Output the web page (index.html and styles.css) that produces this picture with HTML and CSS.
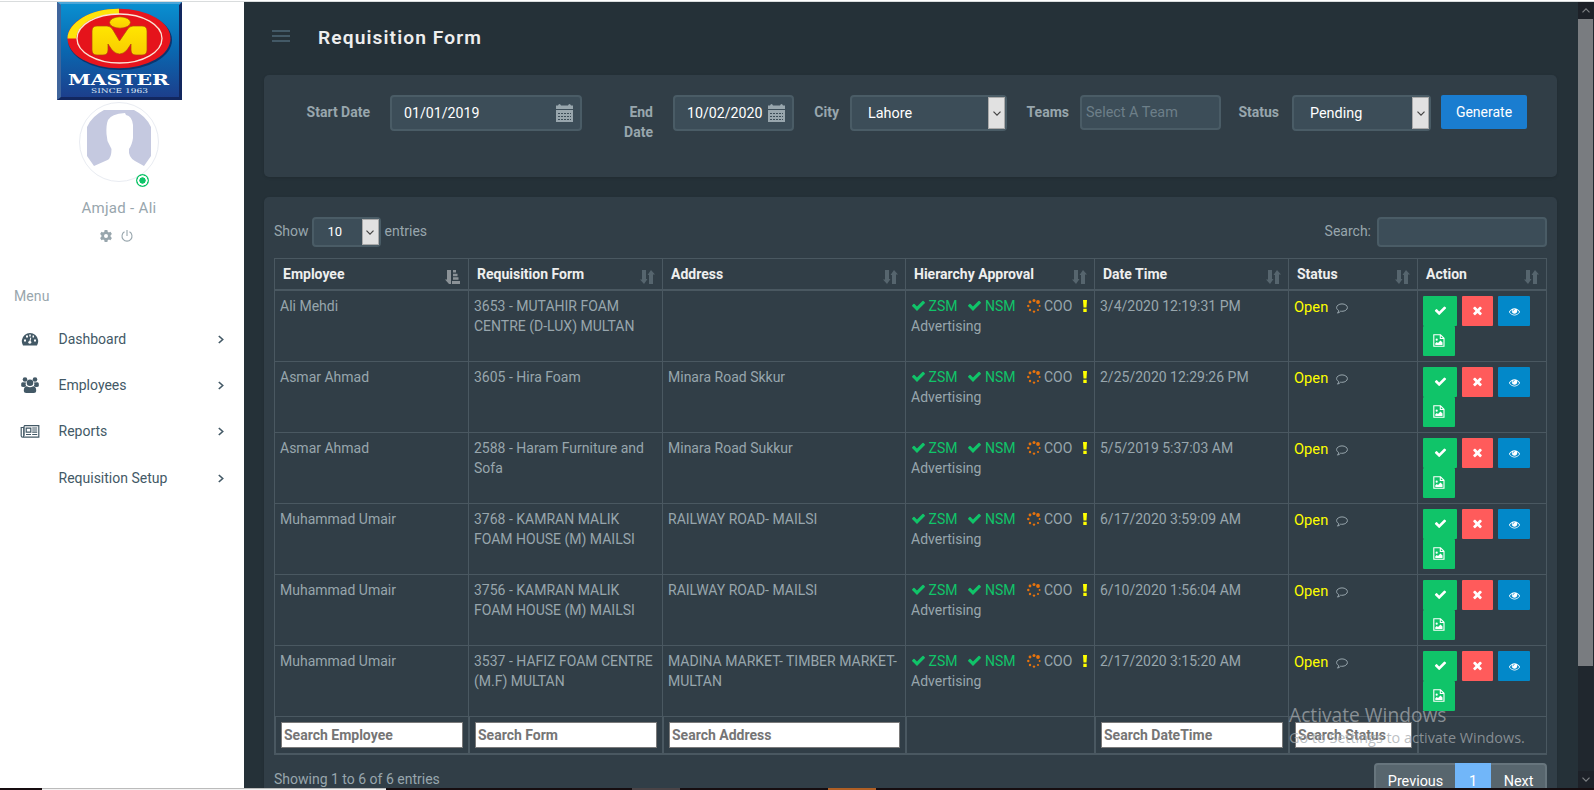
FILE: index.html
```html
<!DOCTYPE html>
<html lang="en">
<head>
<meta charset="utf-8">
<title>Requisition Form</title>
<link rel="stylesheet" href="styles.css">
</head>
<body>
<svg class="defs" aria-hidden="true">
  <symbol id="check" viewBox="0 0 1792 1792"><path d="M1671 566q0 40-28 68l-724 724-136 136q-28 28-68 28t-68-28l-136-136-362-362q-28-28-28-68t28-68l136-136q28-28 68-28t68 28l294 295 656-657q28-28 68-28t68 28l136 136q28 28 28 68z"/></symbol>
  <symbol id="times" viewBox="0 0 1792 1792"><path d="M1490 1322q0 40-28 68l-136 136q-28 28-68 28t-68-28l-294-294-294 294q-28 28-68 28t-68-28l-136-136q-28-28-28-68t28-68l294-294-294-294q-28-28-28-68t28-68l136-136q28-28 68-28t68 28l294 294 294-294q28-28 68-28t68 28l136 136q28 28 28 68t-28 68l-294 294 294 294q28 28 28 68z"/></symbol>
  <symbol id="eye" viewBox="0 0 1792 1792"><path d="M1664 960q-152-236-381-353 61 104 61 225 0 185-131.500 316.500t-316.500 131.500-316.500-131.500-131.500-316.500q0-121 61-225-229 117-381 353 133 205 333.500 326.500t434.500 121.500 434.500-121.500 333.500-326.500zm-720-384q0-20-14-34t-34-14q-125 0-214.500 89.500t-89.500 214.500q0 20 14 34t34 14 34-14 14-34q0-86 61-147t147-61q20 0 34-14t14-34zm848 384q0 34-20 69-140 230-376.500 368.500t-499.500 138.500-499.500-139-376.500-368q-20-35-20-69t20-69q140-229 376.500-368t499.500-139 499.500 139 376.500 368q20 35 20 69z"/></symbol>
  <symbol id="file" viewBox="0 0 12 13"><path fill="none" stroke="currentColor" stroke-width="1.100" d="M.8.8h6.700l3.500 3.500v8H.8zM7.300.8v3.700H11"/><circle cx="3.700" cy="5.700" r="1.100"/><path d="M2.300 11V9.300l1.500-1.400 1.200 1.100 2.500-2.500 2 2V11z"/></symbol>
  <symbol id="spin" viewBox="0 0 14 14"><circle cx="7" cy="1.500" r="1.500"/><circle cx="11" cy="3" r="1.900"/><circle cx="12.600" cy="7" r="1"/><circle cx="11" cy="11" r="1.100"/><circle cx="7" cy="12.600" r="1.200"/><circle cx="3" cy="11" r="1.200"/><circle cx="1.300" cy="7" r="1.200"/><circle cx="3" cy="3" r="1.400"/></symbol>
  <symbol id="bang" viewBox="0 0 4 12"><path d="M0 0h4l-.5 7.500h-3zM.3 8.700h3.400V12H.3z"/></symbol>
  <symbol id="comment" viewBox="0 0 12 11"><path fill="none" stroke="currentColor" d="M6 .9c3 0 5.400 1.600 5.400 3.700S9 8.300 6 8.300q-.7 0-1.400-.1Q3.400 9.700 1.500 10.100q1-1 1.200-2.600C1.400 6.800.6 5.800.6 4.600.6 2.500 3 .9 6 .9z"/></symbol>
  <symbol id="sort" viewBox="0 0 15 14"><path d="M2 0h4v9h1.500L4 14 0 9.500h2zM9 14V5H7.500L11 0l4 4.500h-2V14z"/></symbol>
  <symbol id="sort-asc" viewBox="0 0 15 14"><path d="M2 0h4v14H4L0 9.500h2zM8 0h3v2.500H8zM8 3.700h4.500v2.500H8zM8 7.300h5.500v2.500H8zM7 11h8v3H7z"/></symbol>
  <symbol id="calendar" viewBox="0 0 17 18"><path d="M0 1.500h2Q2.500 0 3.500 0T5 1.500h7Q12.500 0 13.500 0T15 1.500h2V5H0zM0 6h17v12H0z"/><path stroke="#3c4d58" stroke-width="1" stroke-dasharray="2 1" d="M2 9.500h13M2 12.500h13M2 15.500h13"/></symbol>
  <symbol id="down" viewBox="0 0 8 5"><path fill="none" stroke="currentColor" stroke-width="1.200" d="M.5.6 4 4.100 7.500.6"/></symbol>
  <symbol id="right" viewBox="0 0 6 8"><path fill="none" stroke="currentColor" stroke-width="1.600" d="M.8.5 4.700 4 .8 7.500"/></symbol>
</svg>

<div class="strip-top"></div>
<div class="app">
  <aside class="sidebar">
    <svg class="logo" viewBox="0 0 125 98">
      <defs>
        <linearGradient id="sky" x2="0" y2="1"><stop offset="0" stop-color="#0a8fd0"/><stop offset=".5" stop-color="#0a67b0"/><stop offset="1" stop-color="#1c3f8c"/></linearGradient>
        <linearGradient id="gold" x2="0" y2="1"><stop offset="0" stop-color="#ffe600"/><stop offset="1" stop-color="#f9cc00"/></linearGradient>
      </defs>
      <path fill="#12275f" d="M0 0h125v98H0z"/>
      <path fill="#4aa5d8" d="M0 0h125l-3 3H4z"/>
      <path fill="url(#sky)" d="M4 2h118v93H4z"/>
      <path fill="#5d8fc4" d="M0 0l4 3v92l-4 3z" opacity=".6"/>
      <ellipse cx="63" cy="38" rx="52" ry="30" fill="#0b356f"/>
      <ellipse cx="62" cy="36.500" rx="51.500" ry="29.800" fill="#e8151d"/>
      <path fill="#ffe40a" d="M10.500 36.500C11 20 34 6.500 62 6.700V12C38 12 20 22 19.500 36.500z"/>
      <ellipse cx="62.500" cy="36.500" rx="42.500" ry="24.500" fill="#e5131b" stroke="#fbe5d6" stroke-width="1.300"/>
      <g stroke="#b5420c" stroke-width=".7" fill="url(#gold)"><path d="M35 29q0-5 5-5h10q4 0 6 4l6.500 11 7.500-11q2-4 6-4h9q5 0 5 5v19q0 5-5 5h-6q-5 0-5-5v-6l-4 6q-7.500 8-15 0l-4-6v6q0 5-5 5h-6q-5 0-5-5z"/><ellipse cx="63" cy="20.500" rx="10.500" ry="5.700"/></g>
      <text class="logo-name" x="11" y="83" textLength="101" lengthAdjust="spacingAndGlyphs">MASTER</text>
      <text class="logo-since" x="34" y="91" textLength="57" lengthAdjust="spacingAndGlyphs">SINCE 1963</text>
    </svg>
    <div class="avatar">
      <svg viewBox="0 0 64 56"><path fill="#c5c9e0" d="M0 17Q5 6 17 0h30q12 6 17 17v29l-7 10-9-5q-7-4-6-12 3-4 4-11V15q-1-9-7-10l-1-2q-14 1-17 7-2 5-1.500 14l1 7 4 8q0 9-4 11L7 56 0 46z"/></svg>
      <i class="online"></i>
    </div>
    <div class="user">Amjad - Ali</div>
    <div class="user-tools">
      <svg viewBox="0 0 12 12" class="gear"><path fill-rule="evenodd" d="M4.600 0h2.800l.3 1.700 1.200.7L10.500 1.800l1.400 2.300-1.300 1.200v1.400l1.300 1.200-1.400 2.300-1.600-.6-1.200.7-.3 1.700H4.600l-.3-1.700-1.200-.7-1.600.6L.1 7.900l1.300-1.200V5.300L.1 4.100l1.400-2.300 1.600.6 1.200-.7zM6 4a2 2 0 1 0 0 4 2 2 0 0 0 0-4z"/></svg>
      <svg viewBox="0 0 12 12" class="power"><path d="M3.500 1.800a5 5 0 1 0 5 0M6 0v6"/></svg>
    </div>
    <nav class="menu">
      <div class="menu-title">Menu</div>
      <a class="item"><svg class="mi" viewBox="0 0 18 14"><path fill-rule="evenodd" d="M2 13.500A8.200 8.200 0 1 1 16 13.500zM3 7.500v2h2v-2zM5 3.500v2h2v-2zM11.500 3.500v2h1.500v-2zM13 7.500v2h2v-2zM8.300 2.500v2h1.500v-2zM9.300 5.500 8.500 9q-1.700.5-1.200 2 1.500 1.500 3 0 .4-1.200-.8-1.900l.8-3.400z"/></svg><span>Dashboard</span><svg class="chev"><use href="#right"/></svg></a>
      <a class="item"><svg class="mi tall" viewBox="0 0 18 16"><circle cx="4" cy="2.500" r="2.300"/><circle cx="14" cy="2.500" r="2.300"/><path d="M.2 9V6.500Q.8 5 2 5.200l3 .3q-1 2 .3 3.800Q4 9.500 3.500 10 .2 10.200.2 9zM17.800 9V6.500Q17.200 5 16 5.200l-3 .3q1 2-.3 3.800 1.300.2 1.800.7 3.300.2 3.300-1z"/><circle cx="9" cy="5.800" r="3.300"/><path d="M2.800 13.500q0-4 3-4.200 3.200 1.700 6.400 0 3 .2 3 4.200 0 2.500-2.500 2.500H5.300q-2.500 0-2.500-2.500z"/></svg><span>Employees</span><svg class="chev"><use href="#right"/></svg></a>
      <a class="item"><svg class="mi wide" viewBox="0 0 19 13"><path fill="none" stroke="#435966" stroke-width="1.200" d="M3.600.7h14.700v11.500H2.200Q.7 12.200.7 10.700V2.500h2.500v8.200q0 1.500-1 1.500M3.600.7v10M5.700 3.200h4.600v4H5.700zM11.700 3h5M11.700 5h5M11.700 7.200h5M5.500 9.500h5M11.700 9.500h5"/></svg><span>Reports</span><svg class="chev"><use href="#right"/></svg></a>
      <a class="item last"><i class="mi"></i><span>Requisition Setup</span><svg class="chev"><use href="#right"/></svg></a>
    </nav>
  </aside>

  <main class="main">
    <header class="topbar"><div class="burger"><i></i><i></i><i></i></div><h1>Requisition Form</h1></header>
    <section class="card filters">
      <label class="f-start">Start Date</label>
      <div class="field date d1">01/01/2019<svg><use href="#calendar"/></svg></div>
      <label class="f-end">End<br>Date</label>
      <div class="field date d2">10/02/2020<svg><use href="#calendar"/></svg></div>
      <label class="f-city">City</label>
      <div class="field select s-city">Lahore<b><svg><use href="#down"/></svg></b></div>
      <label class="f-teams">Teams</label>
      <div class="field team">Select A Team</div>
      <label class="f-status">Status</label>
      <div class="field select s-status">Pending<b><svg><use href="#down"/></svg></b></div>
      <button class="generate">Generate</button>
    </section>
    <section class="card list">
      <div class="controls">
        <span>Show</span><div class="field select s-len">10<b><svg><use href="#down"/></svg></b></div><span>entries</span>
        <span class="search-label">Search:</span><div class="field search"></div>
      </div>
      <table class="grid">
        <colgroup><col class="w194"><col class="w194"><col class="w243"><col class="w189"><col class="w194"><col class="w129"><col class="w129"></colgroup>
        <thead><tr>
          <th><div>Employee<svg class="on"><use href="#sort-asc"/></svg></div></th>
          <th><div>Requisition Form<svg><use href="#sort"/></svg></div></th>
          <th><div>Address<svg><use href="#sort"/></svg></div></th>
          <th><div>Hierarchy Approval<svg><use href="#sort"/></svg></div></th>
          <th><div>Date Time<svg><use href="#sort"/></svg></div></th>
          <th><div>Status<svg><use href="#sort"/></svg></div></th>
          <th><div>Action<svg><use href="#sort"/></svg></div></th>
        </tr></thead>
        <tbody id="rows"></tbody>
        <tfoot><tr>
          <td><div class="find">Search Employee</div></td>
          <td><div class="find">Search Form</div></td>
          <td><div class="find">Search Address</div></td>
          <td></td>
          <td><div class="find">Search DateTime</div></td>
          <td><div class="find">Search Status</div></td>
          <td></td>
        </tr></tfoot>
      </table>
      <div class="foot">
        <span>Showing 1 to 6 of 6 entries</span>
        <div class="pager"><span class="prev">Previous</span><span class="cur">1</span><span class="next">Next</span></div>
      </div>
    </section>
  </main>
  <div class="scroll"><div class="btn up"><svg><use href="#down"/></svg></div><div class="thumb"></div><div class="btn dn"><svg><use href="#down"/></svg></div></div>
</div>
<div class="strip-bottom"><i class="t0"></i><i class="t1"></i><i class="t2"></i><i class="t3"></i></div>
<div class="watermark"><div class="wm1">Activate Windows</div><div class="wm2">Go to Settings to activate Windows.</div></div>
<script src="rows.js"></script>
</body>
</html>
```
FILE: styles.css
```css
* { box-sizing: border-box; }
body { margin: 0; width: 1594px; height: 790px; overflow: hidden; position: relative; background: #253138; font-family: Roboto, sans-serif; font-size: 14px; line-height: 20px; color: #98a6ad; }
svg { display: block; fill: currentColor; }
.defs { position: absolute; width: 0; height: 0; }
.strip-top { height: 2px; background: #fff; border-bottom: 1px solid #d9dcdd; }
.app { display: flex; height: 786px; overflow: hidden; }

.sidebar { width: 244px; background: #fff; flex: none; }
.logo { width: 125px; height: 98px; margin-left: 57px; }
.logo-name { font: bold 15px "DejaVu Serif", serif; fill: #fff; }
.logo-since { font: 6.5px "DejaVu Serif", serif; fill: #dfe9f5; }
.avatar { position: relative; width: 80px; height: 80px; margin: 2px 0 0 79px; border: 1px solid #e9ecf2; border-radius: 50%; padding: 7px; }
.avatar svg { width: 64px; height: 56px; }
.online { position: absolute; left: 56px; top: 71px; width: 13px; height: 13px; border-radius: 50%; background: radial-gradient(circle, #10c469 2.9px, #fff 3.4px, #fff 4.9px, #10c469 5.3px); }
.user { text-align: center; width: 238px; margin-top: 16px; font-size: 15px; line-height: 20px; letter-spacing: .3px; }
.user-tools { display: flex; gap: 9px; margin: 12px 0 0 100px; }
.user-tools svg { width: 12px; height: 12px; }
.power path { fill: none; stroke: #98a6ad; stroke-width: 1.1; }
.menu { padding-top: 44px; }
.menu-title { margin: 0 0 10px 14px; letter-spacing: .1px; line-height: 20px; }
.item { display: flex; align-items: center; height: 46px; padding-left: 20px; color: #435966; font-size: 14px; }
.item.last { height: 48px; }
.item span { margin-left: 18.5px; width: 159.5px; }
.mi { width: 20px; height: 14px; fill: #435966; }
.mi.tall { height: 16px; }
.mi.wide { height: 13px; }
.chev { width: 6px; height: 9px; }

.main { width: 1334px; flex: none; padding-left: 20px; }
.topbar { height: 73px; display: flex; padding: 28px 0 0 8px; }
.burger { width: 18px; display: flex; flex-direction: column; gap: 3px; }
.burger i { height: 2px; background: #435966; }
h1 { margin: -6px 0 0 28px; font-size: 19.2px; line-height: 28px; font-weight: 600; letter-spacing: 1.1px; color: #eee; height: 28px; }
.card { width: 1293px; background: #313e47; border-radius: 5px; box-shadow: 0 1px 3px rgba(0,0,0,.12); }
.filters { height: 102px; margin-bottom: 20px; padding-top: 20px; display: flex; align-items: flex-start; color: #98a6ad; font-weight: 700; }
.filters label { padding-top: 7px; white-space: nowrap; text-align: right; }
.field { background: #3c4d58; border: 2px solid #4a5c66; border-radius: 4px; color: #fff; font-size: 14.4px; font-weight: 400; }
.filters .field { height: 36px; line-height: 33px; }
.f-start { width: 106px; }
.filters .date { display: flex; justify-content: space-between; padding: 0 7px 0 12px; margin-left: 20px; font-size: 14.2px; }
.date svg { width: 17px; height: 18px; margin-top: 7px; color: #98a6ad; }
.d1 { width: 192px; }
.f-end { width: 71px; }
.d2 { width: 121px; }
.f-city { width: 45px; }
.select { display: flex; justify-content: space-between; }
.select b { width: 17px; background: #e1e1e1; border: 1px solid #aaa; display: flex; align-items: center; justify-content: center; color: #444; }
.select svg { width: 8px; height: 5px; }
.s-city { width: 157px; margin-left: 11px; padding-left: 16px; }
.f-teams { width: 62px; }
.filters .team { width: 141px; height: 35px; margin-left: 11px; padding-left: 4px; color: #6d7f89; line-height: 31px; }
.f-status { width: 58px; }
.s-status { width: 139px; margin-left: 13px; padding-left: 16px; }
.generate { width: 86px; height: 34px; margin-left: 10px; border: 0; border-radius: 2px; background: #1a7dd0; color: #fff; font: 400 14px Roboto, sans-serif; padding: 0; }

.list { height: 600px; padding: 20px 10px 0; }
.controls { display: flex; height: 41px; line-height: 28px; }
.controls .field { height: 30px; }
.s-len { width: 69px; margin: 0 4px 0 3px; padding-left: 14px; line-height: 26px; font-size: 13px; }
.search-label { margin-left: auto; }
.search { width: 170px; margin-left: 6px; }
.grid { width: 1273px; table-layout: fixed; border-collapse: separate; border-spacing: 0; border-right: 1px solid #4a5861; }
.w194 { width: 194px; } .w243 { width: 243px; } .w189 { width: 189px; } .w129 { width: 129px; }
th { height: 33px; padding: 0 7px 0 8px; border-left: 1px solid #4a5861; border-top: 1px solid #4a5861; border-bottom: 2px solid #4a5861; text-align: left; color: #eee; font-weight: 700; }
th div { display: flex; justify-content: space-between; height: 30px; line-height: 30px; }
th svg { width: 15px; height: 14px; margin-top: 11px; color: #56656e; }
th svg.on { color: #8b9297; margin-right: 1px; }
tbody td { height: 71px; padding: 5px 0 0 5px; border-left: 1px solid #4a5861; border-bottom: 1px solid #4a5861; vertical-align: top; white-space: nowrap; }
.approval { display: flex; align-items: center; height: 20px; }
.approval .ok { color: #10c469; }
.approval svg { width: 15px; height: 15px; margin: -1px 2.5px 0 0; }
.approval .ok + .ok { margin-left: 10px; }
.approval span { display: flex; align-items: center; }
.approval .wait { margin-left: 11.5px; }
.approval .wait svg { width: 14px; height: 14px; color: #e8730c; margin-right: 3px; }
.approval svg.bang { width: 4px; height: 12px; margin: -1px 0 0 11px; color: #ff0; }
.status { display: flex; color: #ff0; font-size: 14.7px; line-height: 22px; }
.status svg { width: 12px; height: 11px; margin: 7px 0 0 7.5px; color: #98a6ad; }
.actions { display: flex; flex-wrap: wrap; column-gap: 5px; width: 115px; color: #fff; }
.actions i { display: flex; align-items: center; justify-content: center; height: 30px; width: 32px; background: #10c469; border-radius: 1px; }
.actions i.a1 { width: 34px; } .actions i.a2 { width: 31px; background: #ff5b5b; } .actions i.a3 { background: #0288c9; }
.actions svg { width: 13px; height: 13px; margin-top: -1px; }
.actions .a3 svg { width: 11px; height: 11px; margin-top: 0; }
.actions .a4 svg { width: 12px; }
tfoot td { height: 38px; border-left: 2px solid #4a5861; border-bottom: 2px solid #4a5861; padding: 5px; vertical-align: top; }
.find { height: 26px; border: 1px solid #7a7a7a; background: #fff; color: #757575; font-weight: 700; line-height: 24px; padding-left: 2px; white-space: nowrap; }
.foot { display: flex; justify-content: space-between; padding-top: 8px; }
.foot > span { padding-top: 6px; }
.pager { display: flex; height: 36px; border: 2px solid #67757d; border-radius: 4px; background: #58666e; color: #fff; line-height: 33px; text-align: center; font-size: 14.4px; }
.prev { width: 79px; } .cur { width: 36px; margin-top: -2px; padding-top: 2px; background: #71b6f9; } .next { width: 54px; padding-left: 1px; }

.scroll { width: 16px; background: #20272e; display: flex; flex-direction: column; }
.btn { height: 17px; display: flex; align-items: center; justify-content: center; color: #7d8084; background: #1d2128; }
.btn svg { width: 8px; height: 5px; }
.up svg { transform: rotate(180deg); }
.thumb { height: 647px; background: #797c80; width: 15px; }
.dn { margin-top: auto; }
.strip-bottom { display: flex; height: 2px; background: #160d10; }
.t0 { width: 42px; } .t1 { width: 344px; background: #f3f3f3; border-top: 1px solid #bbb; } .t2 { width: 48px; margin-left: 246px; background: #4a4346; } .t3 { width: 48px; margin-left: 148px; background: #b05f25; }
.watermark { position: absolute; left: 1289px; top: 702px; font-family: "Open Sans", sans-serif; color: rgba(165,170,174,.75); white-space: nowrap; }
.wm1 { font-size: 19.2px; line-height: 26px; }
.wm2 { font-size: 14.4px; line-height: 20px; }
```
FILE: rows.js
```js
const rows = [
  ["Ali Mehdi", "3653 - MUTAHIR FOAM<br>CENTRE (D-LUX) MULTAN", "", "3/4/2020 12:19:31 PM"],
  ["Asmar Ahmad", "3605 - Hira Foam", "Minara Road Skkur", "2/25/2020 12:29:26 PM"],
  ["Asmar Ahmad", "2588 - Haram Furniture and<br>Sofa", "Minara Road Sukkur", "5/5/2019 5:37:03 AM"],
  ["Muhammad Umair", "3768 - KAMRAN MALIK<br>FOAM HOUSE (M) MAILSI", "RAILWAY ROAD- MAILSI", "6/17/2020 3:59:09 AM"],
  ["Muhammad Umair", "3756 - KAMRAN MALIK<br>FOAM HOUSE (M) MAILSI", "RAILWAY ROAD- MAILSI", "6/10/2020 1:56:04 AM"],
  ["Muhammad Umair", "3537 - HAFIZ FOAM CENTRE<br>(M.F) MULTAN", "MADINA MARKET- TIMBER MARKET-<br>MULTAN", "2/17/2020 3:15:20 AM"]
];
const icon = (name, cls = "") => `<svg class="${cls}"><use href="#${name}"/></svg>`;
const approval = `<div class="approval"><span class="ok">${icon("check")}ZSM</span><span class="ok">${icon("check")}NSM</span><span class="wait">${icon("spin")}COO</span>${icon("bang", "bang")}</div>Advertising`;
const actions = `<div class="actions"><i class="a1">${icon("check")}</i><i class="a2">${icon("times")}</i><i class="a3">${icon("eye")}</i><i class="a4">${icon("file")}</i></div>`;
document.getElementById("rows").innerHTML = rows.map(([who, form, address, time]) =>
  `<tr><td>${who}</td><td>${form}</td><td>${address}</td><td>${approval}</td><td>${time}</td><td><div class="status">Open${icon("comment")}</div></td><td>${actions}</td></tr>`
).join("");
```
